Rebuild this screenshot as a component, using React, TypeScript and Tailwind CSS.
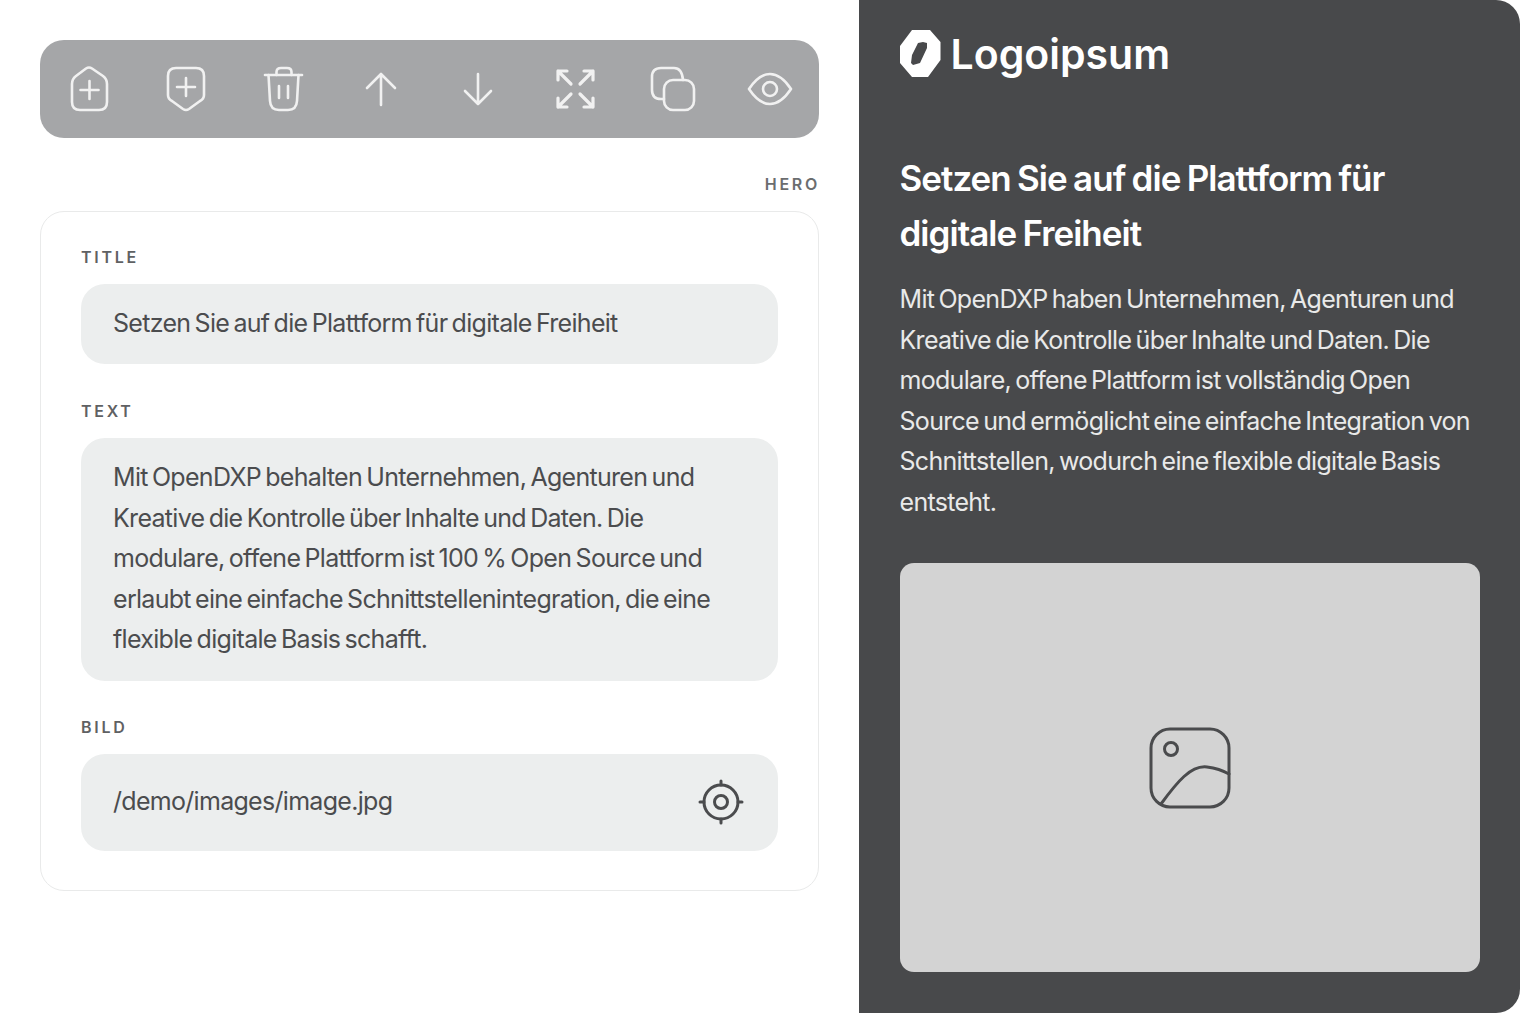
const inter = "font-['Inter','Liberation_Sans',sans-serif]";
const bodyText = "text-[25px] tracking-[-0.028em] [word-spacing:-2.1px]";

const ToolIcon = ({ children }: { children: React.ReactNode }) => (
  <button className="flex items-center justify-center">
    <svg
      width="48"
      height="48"
      viewBox="0 0 48 48"
      fill="none"
      stroke="#f1f1f1"
      strokeWidth="2.6"
      strokeLinecap="round"
      strokeLinejoin="round"
    >
      {children}
    </svg>
  </button>
);

const FieldLabel = ({ children }: { children: React.ReactNode }) => (
  <label className="block text-[16px] leading-[20px] font-semibold tracking-[0.17em] text-[#5f6163] mb-[17px]">
    {children}
  </label>
);

const Toolbar = () => (
  <div className="grid grid-cols-8 h-[98px] rounded-[24px] bg-[#a5a6a8] items-center">
    <ToolIcon>
      <path d="M21 3.5 Q24 1.5 27 3.5 L38 11 Q42 14 42 19 V37 Q42 45 34 45 H15 Q7 45 7 37 V19 Q7 14 11 11 Z" />
      <path d="M24.5 16 V34 M15.5 25 H33.5" />
    </ToolIcon>
    <ToolIcon>
      <path d="M14 3 H34 Q42 3 42 11 V30 Q42 34 38 36 L27 44 Q24 46 21 44 L10 36 Q6 34 6 30 V11 Q6 3 14 3 Z" />
      <path d="M24 13 V31 M15 22 H33" />
    </ToolIcon>
    <ToolIcon>
      <path d="M6 10 H43" />
      <path d="M17.5 10 V7 Q17.5 3 22 3 H28 Q32.5 3 32.5 7 V10" />
      <path d="M9.5 10 L11 36 Q11.5 45 20 45 H29 Q37.5 45 38 36 L39.5 10" />
      <path d="M20 21 V33 M29 21 V33" />
    </ToolIcon>
    <ToolIcon>
      <path d="M24 9 V40 M10 23 L24 9 L38 23" />
    </ToolIcon>
    <ToolIcon>
      <path d="M24 9 V39 M11 26 L24 39 L37 26" />
    </ToolIcon>
    <ToolIcon>
      <g strokeWidth="3.2">
        <path d="M6 15 V6 H15 M6 6 L19 19" />
        <path d="M32 6 H41 V15 M41 6 L28 19" />
        <path d="M6 33 V42 H15 M6 42 L19 29" />
        <path d="M41 33 V42 H32 M41 42 L28 29" />
      </g>
    </ToolIcon>
    <ToolIcon>
      <path d="M15 34 H12 Q3 34 3 25 V12 Q3 3 12 3 H25 Q33 3 34 15" />
      <rect x="15" y="15" width="30" height="30" rx="9" />
    </ToolIcon>
    <ToolIcon>
      <path d="M3 24 Q13 9 24 9 Q35 9 45 24 Q35 39 24 39 Q13 39 3 24 Z" />
      <circle cx="24" cy="24" r="7" />
    </ToolIcon>
  </div>
);

const Editor = () => (
  <div className="w-[859px] shrink-0 p-[40px] bg-white">
    <Toolbar />
    <div className="mt-[36px] mr-[-1px] text-right text-[16px] leading-[20px] font-semibold tracking-[0.17em] text-[#6b6d6f]">
      HERO
    </div>
    <div className="mt-[17px] h-[680px] rounded-[24px] border border-[#e9eaea] px-[40px] pt-[35px]">
      <FieldLabel>TITLE</FieldLabel>
      <div className={`h-[80px] flex items-center rounded-[24px] bg-[#eceeee] px-[32px] text-[#4b4c4e] ${bodyText}`}>
        Setzen Sie auf die Plattform für digitale Freiheit
      </div>
      <div className="mt-[37px]">
        <FieldLabel>TEXT</FieldLabel>
        <div className={`h-[243px] rounded-[24px] bg-[#eceeee] px-[32px] pt-[19px] leading-[40.5px] text-[#4b4c4e] ${bodyText}`}>
          <p>Mit OpenDXP behalten Unternehmen, Agenturen und</p>
          <p>Kreative die Kontrolle über Inhalte und Daten. Die</p>
          <p>modulare, offene Plattform ist 100 % Open Source und</p>
          <p>erlaubt eine einfache Schnittstellenintegration, die eine</p>
          <p>flexible digitale Basis schafft.</p>
        </div>
      </div>
      <div className="mt-[36px]">
        <FieldLabel>BILD</FieldLabel>
        <div className={`h-[97px] flex items-center justify-between rounded-[24px] bg-[#eceeee] pl-[32px] pr-[34px] text-[#4b4c4e] ${bodyText}`}>
          <span className="mt-[-2px]">/demo/images/image.jpg</span>
          <svg width="46" height="46" viewBox="0 0 46 46" fill="none" stroke="#4b4c4e" strokeWidth="3" strokeLinecap="round" className="mt-[-2px]">
            <circle cx="23" cy="23" r="17" />
            <circle cx="23" cy="23" r="6.5" />
            <path d="M23 2 V6 M23 40 V44 M2 23 H6 M40 23 H44" />
          </svg>
        </div>
      </div>
    </div>
  </div>
);

const Preview = () => (
  <div className="flex-1 min-w-0 rounded-r-[24px] bg-[#48494b] px-[40.5px] text-white">
    <div className="flex items-center h-[108px] gap-[10px] pb-[2px]">
      <svg width="41" height="47" viewBox="0 0 41 47" className="shrink-0">
        <path
          fillRule="evenodd"
          fill="#ffffff"
          d="M12 0 H30 L40.5 12 V30 L28 47 H12 L0 33 V16 Z M23 12 L18 13 L12 25 L11 33 L13 35 L20 33 L27 18 L27 13 Z"
        />
      </svg>
      <span className="mt-[3px] text-[41px] font-semibold tracking-normal">Logoipsum</span>
    </div>
    <h1 className="mt-[43px] text-[35px] leading-[55px] font-semibold tracking-[-0.028em] [word-spacing:-1.5px]">
      Setzen Sie auf die Plattform für
      <br />
      digitale Freiheit
    </h1>
    <div className={`mt-[18px] leading-[40.5px] text-[#e9e9e9] ${bodyText}`}>
      <p>Mit OpenDXP haben Unternehmen, Agenturen und</p>
      <p>Kreative die Kontrolle über Inhalte und Daten. Die</p>
      <p>modulare, offene Plattform ist vollständig Open</p>
      <p>Source und ermöglicht eine einfache Integration von</p>
      <p>Schnittstellen, wodurch eine flexible digitale Basis</p>
      <p>entsteht.</p>
    </div>
    <div className="mt-[41px] w-[580px] h-[409px] rounded-[14px] bg-[#d3d3d3] flex items-center justify-center">
      <svg width="82" height="82" viewBox="0 0 82 82" fill="none" stroke="#4a4b4d" strokeWidth="3" strokeLinecap="round">
        <rect x="2" y="2" width="78" height="78" rx="19" />
        <circle cx="22" cy="22" r="6.5" />
        <path d="M12 77 C28 55 42 38 58 40 C66 41 73 43 80 47" />
      </svg>
    </div>
  </div>
);

export default function App() {
  return (
    <div className={`flex w-[1520px] h-[1013px] overflow-hidden bg-white ${inter}`}>
      <Editor />
      <Preview />
    </div>
  );
}
